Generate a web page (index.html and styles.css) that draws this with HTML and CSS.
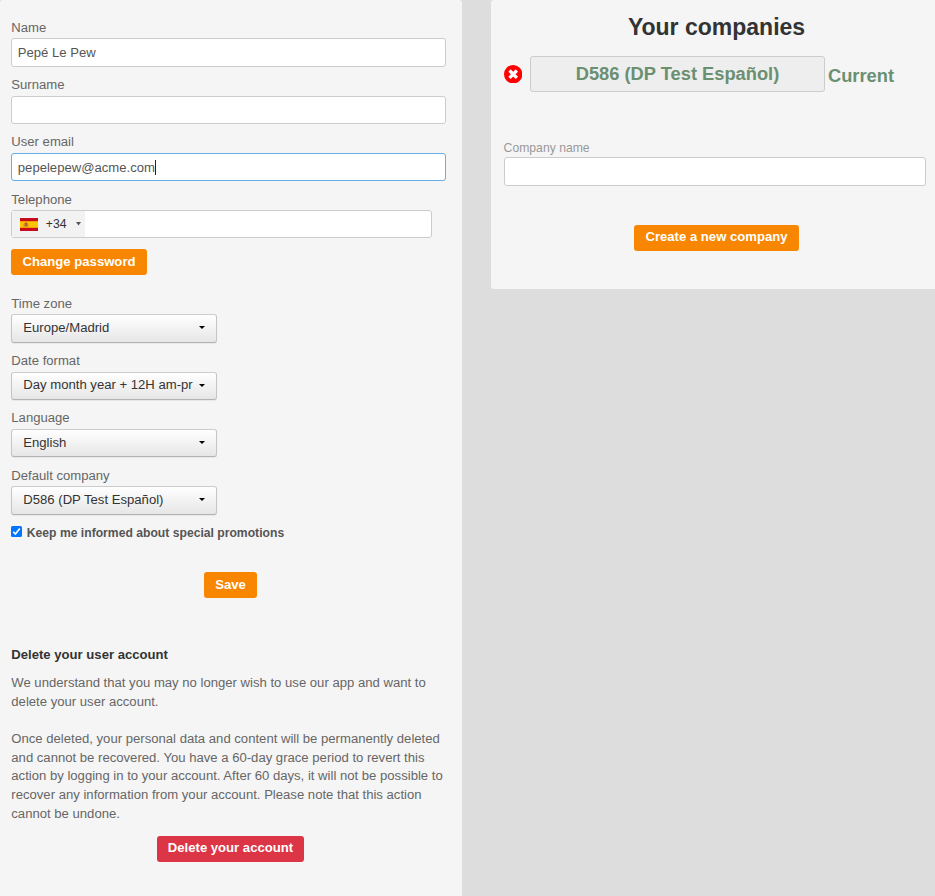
FILE: index.html
```html
<!DOCTYPE html>
<html lang="en">
<head>
<meta charset="utf-8">
<title>User account</title>
<link rel="stylesheet" href="styles.css">
</head>
<body>
<main class="page">
  <section class="panel profile">
    <div class="field"><label>Name</label><div class="input">Pepé Le Pew</div></div>
    <div class="field"><label>Surname</label><div class="input"></div></div>
    <div class="field"><label>User email</label><div class="input focused">pepelepew@acme.com<span class="cursor"></span></div></div>
    <div class="field phone-field"><label>Telephone</label>
      <div class="input phone">
        <div class="country">
          <svg class="flag" viewBox="0 0 18 13"><path fill="#c60b1e" d="M0 0h18v13H0z"/><path fill="#ffc400" d="M0 3.2h18v6.6H0z"/><path fill="#ad6530" d="M4.5 5h3v3.5h-3z"/><path fill="#d4882a" d="M3.5 5.6h1V9h-1zM7.5 5.6h1V9h-1zM5 4h2v1H5z"/></svg>
          <span class="code">+34</span>
          <svg class="tiny-arrow" viewBox="0 0 5 4"><path d="M0 0h5L2.5 3.5z"/></svg>
        </div>
      </div>
    </div>
    <button class="btn password">Change password</button>
    <div class="field"><label>Time zone</label><div class="select"><span>Europe/Madrid</span><svg viewBox="0 0 6 3"><path d="M0 0h6L3 3z"/></svg></div></div>
    <div class="field"><label>Date format</label><div class="select"><span>Day month year + 12H am-pr</span><svg viewBox="0 0 6 3"><path d="M0 0h6L3 3z"/></svg></div></div>
    <div class="field"><label>Language</label><div class="select"><span>English</span><svg viewBox="0 0 6 3"><path d="M0 0h6L3 3z"/></svg></div></div>
    <div class="field"><label>Default company</label><div class="select"><span>D586 (DP Test Español)</span><svg viewBox="0 0 6 3"><path d="M0 0h6L3 3z"/></svg></div></div>
    <div class="promo">
      <svg class="check" viewBox="0 0 11 11"><rect width="11" height="11" rx="1.6" fill="#0075ff"/><path d="M2.2 5.8l2.2 2.2 4.4-5.6" fill="none" stroke="#fff" stroke-width="1.6"/></svg>
      <span>Keep me informed about special promotions</span>
    </div>
    <button class="btn save">Save</button>
    <h2>Delete your user account</h2>
    <p>We understand that you may no longer wish to use our app and want to<br>delete your user account.</p>
    <p>Once deleted, your personal data and content will be permanently deleted<br>and cannot be recovered. You have a 60-day grace period to revert this<br>action by logging in to your account. After 60 days, it will not be possible to<br>recover any information from your account. Please note that this action<br>cannot be undone.</p>
    <button class="btn danger">Delete your account</button>
  </section>
  <section class="panel companies">
    <h1>Your companies</h1>
    <div class="company">
      <svg class="remove" viewBox="0 0 18 18"><circle cx="9" cy="9" r="9" fill="#f00"/><path d="M5.4 5.4l7.2 7.2M12.6 5.4l-7.2 7.2" stroke="#fff" stroke-width="3.2"/></svg>
      <div class="company-name">D586 (DP Test Español)</div>
      <span class="current">Current</span>
    </div>
    <label>Company name</label>
    <div class="input"></div>
    <button class="btn create">Create a new company</button>
  </section>
</main>
</body>
</html>
```
FILE: styles.css
```css
* { box-sizing: border-box; }
body {
  margin: 0;
  background: #ddd;
  color: #666;
  font: 13.12px/18.75px "Liberation Sans", Arial, sans-serif;
}
.page { display: flex; align-items: flex-start; gap: 29px; height: 896px; overflow: hidden; }
.panel { background: #f5f5f5; border-radius: 3px; }
.profile {
  display: flex;
  flex-direction: column;
  align-items: flex-start;
  width: 462px;
  height: 900px;
  padding: 17.8px 16px 0 11.3px;
  flex: none;
}
.field { width: 100%; height: 57.3px; flex: none; }
label { display: block; height: 20.5px; line-height: 19px; }
.input {
  display: flex;
  align-items: center;
  height: 28.4px;
  padding: 1.4px 5.5px 0;
  background: #fff;
  border: 1px solid #ccc;
  border-radius: 3px;
  color: #555;
}
.focused { padding-top: 2.2px; border-color: #66afe9; }
.cursor { width: 1px; height: 15px; margin-top: -1px; background: #222; }
.phone { width: 421px; height: 28px; padding: 0; }
.country {
  display: flex;
  align-items: center;
  width: 73px;
  height: 100%;
  padding-left: 7.7px;
  background: #f2f2f2;
  color: #333;
  font-size: 12.2px;
}
.flag { width: 18px; height: 13px; }
.code { width: 30px; margin-left: 7.8px; }
.tiny-arrow { width: 5px; height: 4px; margin-top: -1px; fill: #555; }
.btn {
  height: 26px;
  flex: none;
  padding: 0;
  border: 0;
  border-radius: 3px;
  background: #f88600;
  color: #fff;
  font: bold 13.12px/24px "Liberation Sans", Arial, sans-serif;
  text-align: center;
  white-space: nowrap;
}
.password { width: 136px; margin: 2px 0 18.8px; padding-right: .5px; }
.select {
  display: flex;
  align-items: center;
  justify-content: space-between;
  width: 206px;
  height: 28.4px;
  padding: 0 11px 0 11px;
  border: 1px solid #bbb;
  border-color: #ccc #c4c4c4 #b3b3b3;
  border-radius: 3px;
  background: linear-gradient(#fff, #e6e6e6);
  box-shadow: 0 1px 1px rgba(0, 0, 0, .06);
  color: #333;
  white-space: nowrap;
}
.select svg { width: 6px; height: 3px; margin-top: -1px; fill: #000; }
.promo {
  display: flex;
  align-items: center;
  height: 19px;
  margin-top: .8px;
  color: #555;
  font-size: 12.17px;
  font-weight: bold;
}
.check { width: 11px; height: 11px; margin: -3px 4.5px 0 0; }
.save { width: 53px; margin: 29.4px 0 47px 192.7px; }
h2 { margin: 0 0 9.6px; color: #333; font-size: 13.12px; line-height: 19px; }
p { margin: 0 0 18.6px; white-space: nowrap; }
.danger { width: 147px; margin: -6px 0 0 145.7px; padding-bottom: 2px; background: #dc3545; }
.companies {
  display: flex;
  flex-direction: column;
  width: 444px;
  height: 289px;
  padding: 12px 9px 0 13px;
  border-radius: 3px 0 0 3px;
}
h1 { margin: 0; padding-left: 3px; color: #333; font-size: 23px; line-height: 30px; text-align: center; }
.company { display: flex; align-items: center; height: 36px; margin: 14px 0 47px; color: #6b8f71; font-size: 18.3px; font-weight: bold; }
.remove { width: 18.4px; height: 18.4px; margin: 0 7.6px 0 0; }
.company-name {
  width: 295px;
  height: 36px;
  border: 1px solid #ccc;
  border-radius: 3px;
  background: #eee;
  line-height: 34px;
  text-align: center;
}
.current { margin: 4px 0 0 3px; }
.companies label { height: 18px; margin-left: -.4px; color: #999; font-size: 12.2px; line-height: 18px; }
.companies .input { height: 29px; }
.create { width: 165px; margin: 39px 0 0 130px; padding-bottom: 2px; }
```
